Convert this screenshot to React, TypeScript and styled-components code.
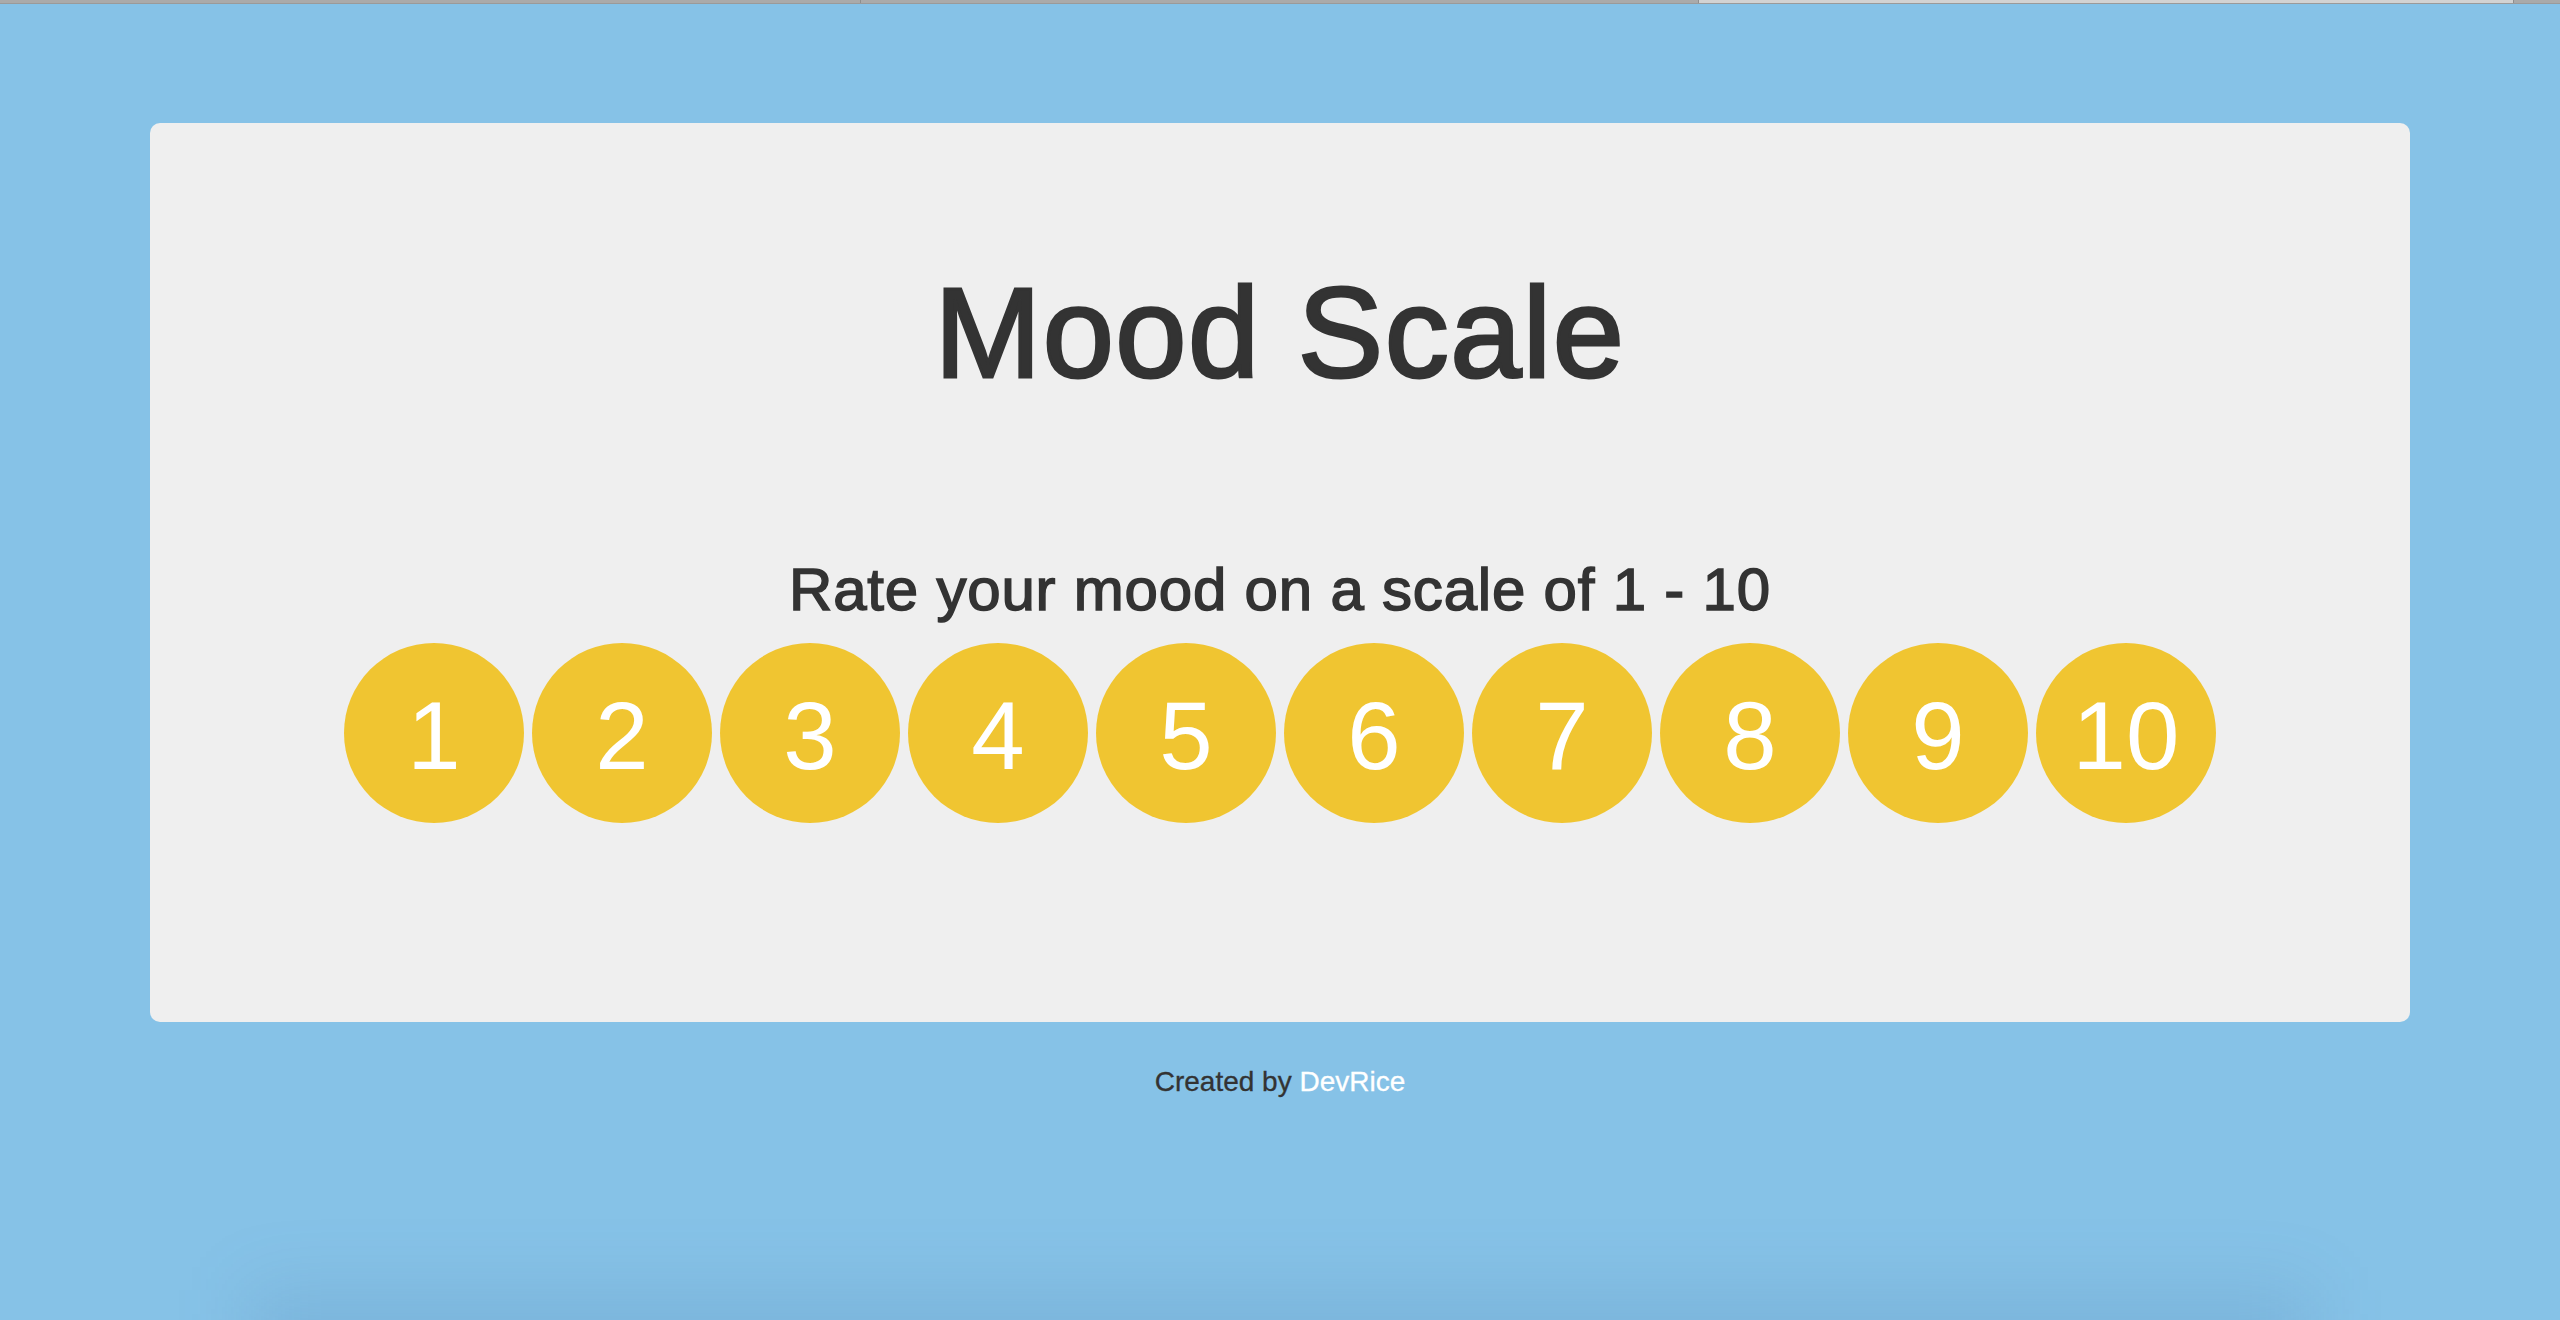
import React from "react";
import styled, { createGlobalStyle } from "styled-components";

const GlobalStyle = createGlobalStyle`
  html, body {
    margin: 0;
    padding: 0;
    background: #86c2e7;
    font-family: "Liberation Sans", Arial, Helvetica, sans-serif;
    color: #333333;
  }
  * { box-sizing: border-box; }
`;

const Page = styled.div`
  position: relative;
  min-height: 1320px;
  overflow: hidden;
  background: #86c2e7;
  display: flex;
  flex-direction: column;
`;

const TabStrip = styled.div`
  display: flex;
  height: 4px;
  background: #a9a9a9;
  border-bottom: 1px solid #9a9a9a;
`;

const Tab = styled.div<{ $width: number; $active?: boolean }>`
  flex: 0 0 ${(p) => p.$width}px;
  height: 100%;
  background: ${(p) => (p.$active ? "#d2d2d2" : "#aaaaaa")};
  border-right: 1px solid #8e8e8e;
`;

const Main = styled.main`
  display: flex;
  flex-direction: column;
  align-items: center;
  padding-top: 119px;
`;

const Card = styled.section`
  width: 2260px;
  background: #efefef;
  border-radius: 10px;
  padding: 146px 0 199px;
  display: flex;
  flex-direction: column;
  align-items: center;
`;

const Title = styled.h1`
  margin: 0;
  font-size: 128px;
  line-height: 128px;
  font-weight: 400;
  color: #333333;
  letter-spacing: 1.5px;
  -webkit-text-stroke: 3px #333333;
`;

const Prompt = styled.p`
  margin: 163px 0 0;
  font-size: 60px;
  line-height: 60px;
  color: #333333;
  letter-spacing: 0.8px;
  -webkit-text-stroke: 1.5px #333333;
`;

const Scale = styled.div`
  margin-top: 23px;
  display: flex;
  gap: 8px;
`;

const Bubble = styled.button`
  width: 180px;
  height: 180px;
  border-radius: 50%;
  border: none;
  background: #f0c531;
  color: #ffffff;
  font-family: "Liberation Sans", Arial, Helvetica, sans-serif;
  font-size: 96px;
  line-height: 96px;
  padding: 6px 0 0;
  display: flex;
  align-items: center;
  justify-content: center;
  cursor: pointer;
`;

const Footer = styled.footer`
  margin-top: 46px;
  font-size: 28px;
  line-height: 28px;
  color: #333333;
  -webkit-text-stroke: 0.3px currentColor;
`;

const Link = styled.a`
  color: #ffffff;
  text-decoration: none;
`;

const DockShadow = styled.div`
  position: absolute;
  left: 250px;
  right: 250px;
  bottom: -70px;
  height: 100px;
  background: rgba(60, 100, 150, 0.14);
  filter: blur(35px);
  pointer-events: none;
`;

export default function App() {
  const values = [1, 2, 3, 4, 5, 6, 7, 8, 9, 10];
  return (
    <>
      <GlobalStyle />
      <Page>
        <TabStrip>
          <Tab $width={861} />
          <Tab $width={838} />
          <Tab $width={815} $active />
        </TabStrip>
        <Main>
          <Card>
            <Title>Mood Scale</Title>
            <Prompt>Rate your mood on a scale of 1 - 10</Prompt>
            <Scale>
              {values.map((v) => (
                <Bubble key={v}>{v}</Bubble>
              ))}
            </Scale>
          </Card>
          <Footer>
            Created by <Link href="#">DevRice</Link>
          </Footer>
        </Main>
        <DockShadow />
      </Page>
    </>
  );
}
